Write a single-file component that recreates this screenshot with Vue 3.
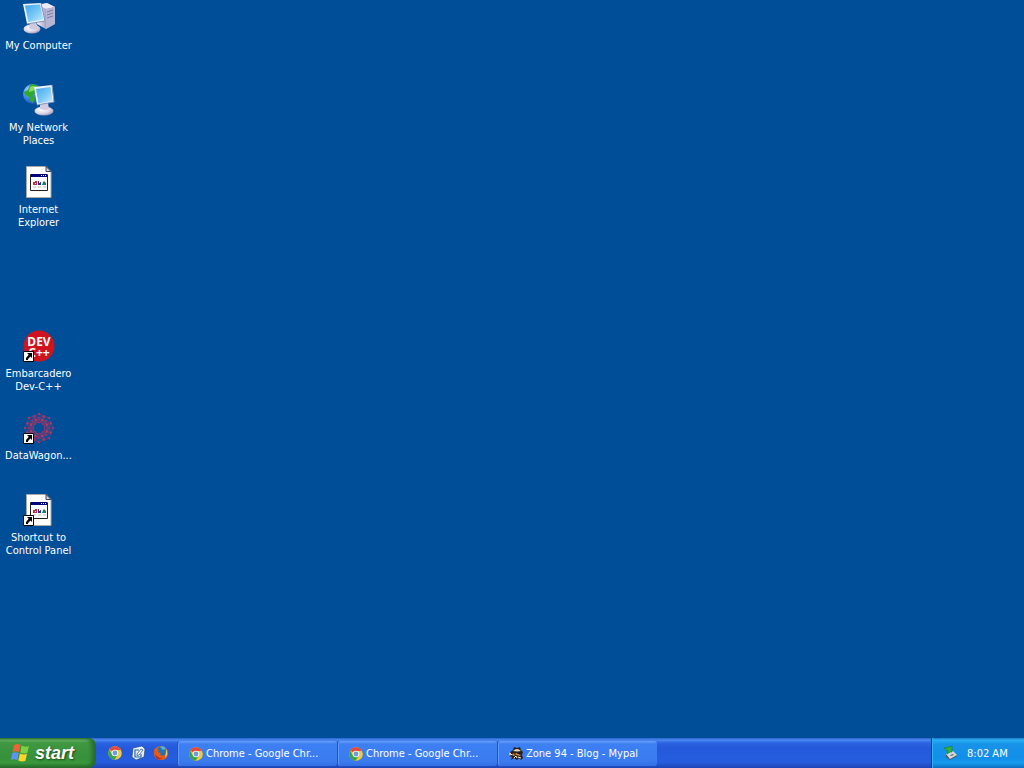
<script setup>
const shortcuts = [
  { icon: 'computer', label: 'My Computer' },
  { icon: 'network', label: 'My Network Places' },
  { icon: 'page', label: 'Internet Explorer' },
  { icon: 'dev', label: 'Embarcadero Dev-C++', link: true, afterGap: true },
  { icon: 'wagon', label: 'DataWagon...', link: true },
  { icon: 'page', label: 'Shortcut to Control Panel', link: true }
]
const quick = [
  { icon: 'chrome', label: 'Google Chrome' },
  { icon: 'desk', label: 'Show Desktop' },
  { icon: 'fox', label: 'Firefox' }
]
const tasks = [
  { icon: 'chrome', label: 'Chrome - Google Chr...' },
  { icon: 'chrome', label: 'Chrome - Google Chr...' },
  { icon: 'mypal', label: 'Zone 94 - Blog - Mypal' }
]
const petals = [0, 45, 90, 135, 180, 225, 270, 315]
</script>

<template>
  <div class="screen">
    <svg class="defs" aria-hidden="true">
      <defs>
        <linearGradient id="glass" x1="0" y1="0" x2="1" y2="1">
          <stop offset="0" stop-color="#3fa6ee" /><stop offset=".55" stop-color="#7cc9f8" /><stop offset="1" stop-color="#c9efff" />
        </linearGradient>
        <linearGradient id="case" x1="0" y1="0" x2="1" y2="0">
          <stop offset="0" stop-color="#f6f5fb" /><stop offset="1" stop-color="#a3a2c6" />
        </linearGradient>
        <radialGradient id="base" cx=".4" cy=".35" r=".7">
          <stop offset="0" stop-color="#fff" /><stop offset=".6" stop-color="#dcd5e6" /><stop offset="1" stop-color="#9d93b8" />
        </radialGradient>
        <radialGradient id="earth" cx=".3" cy=".3" r=".8">
          <stop offset="0" stop-color="#a9d4ff" /><stop offset=".5" stop-color="#3a86e8" /><stop offset="1" stop-color="#1648b8" />
        </radialGradient>
        <symbol id="computer" viewBox="0 0 32 32">
          <path d="M14 3 24 1l8 4v17l-9 5-9-5z" fill="#8d8cb5" />
          <path d="m14 3 10-2 8 4-9 2z" fill="#eceaf6" />
          <path d="M14 3l9 4v20l-9-5z" fill="url(#case)" />
          <path d="M23 7l9-2v17l-9 5z" fill="#b7b5d4" />
          <path d="m24 10 6-2M24 13l6-2M24 16l6-2" stroke="#777aa8" />
          <ellipse cx="9" cy="27" rx="8.5" ry="4.5" fill="url(#base)" />
          <path d="M7 20h6l2 6q-4 3-9 0z" fill="#d0c9df" />
          <path d="m0 2 18-1 4 18-18 3z" fill="#e9f1f9" />
          <path d="m2 3.500 15-1 3.500 15-15 2.500z" fill="url(#glass)" />
          <path d="m18 1 4 18-18 3" fill="none" stroke="#8493bd" />
        </symbol>
        <symbol id="network" viewBox="0 0 32 32">
          <circle cx="10" cy="10" r="10" fill="url(#earth)" />
          <path d="M7 1q5-2 9 2l-3 5-3 3 2 4-2 4-3-2-1-4-4-2-1-3 4-2z" fill="#2fa82b" />
          <path d="M7 3q4-2 6 0l-3 4-4 1z" fill="#8edc5c" />
          <ellipse cx="21" cy="27" rx="9.500" ry="4.500" fill="url(#base)" />
          <path d="M17 19h8l1 6q-4 2-9 0z" fill="#d3cce1" />
          <path d="m11 3 18-2 2 17-17 3z" fill="#ecf3fa" />
          <path d="m13 5 14.500-2 2 14-14 2.500z" fill="url(#glass)" />
          <path d="m29 1 2 17-17 3" fill="none" stroke="#8293bb" />
        </symbol>
        <symbol id="page" viewBox="0 0 32 32">
          <path d="M3.500.5H23l5 5v26H3.500z" fill="#fffefa" stroke="#a9a8a5" />
          <path d="M23 .5v5h5z" fill="#d8dde8" stroke="#3f4350" />
          <path d="M7.500 8.500h17v16h-17z" fill="#fff" stroke="#222" />
          <path d="M8 8h16v3H8z" fill="#000080" />
          <path d="M18 9.500h1m1 0h1m1 0h1" stroke="#fff" />
          <path d="M10 16h2v-1h2v4h-4z" fill="#c32b35" /><path d="M12 17h1v1h-1z" fill="#fff" />
          <path d="M15 15h1v2h2v2h-3z" fill="#25309a" /><path d="M17 16h1v1h-1z" fill="#8b2b55" />
          <path d="M20 16l1-1 2 2v2h-4z" fill="#16806e" />
          <path d="M10 21h3m2 0h3m2 0h3" stroke="#b9bcbf" />
        </symbol>
        <symbol id="dev" viewBox="0 0 32 32">
          <circle cx="16" cy="16" r="15.500" fill="#cf1420" />
          <text class="devtext" x="16" y="16" text-anchor="middle">DEV</text>
          <text class="devtext" x="16" y="27" text-anchor="middle">C++</text>
        </symbol>
        <symbol id="wagon" viewBox="0 0 32 32">
          <g fill="none" stroke="#9c3569" stroke-width=".7">
            <g v-for="a in petals" :key="a" :transform="`rotate(${a} 16 16)`">
              <path d="M16 11V2l5 2-5 7-5-7 5-2M11 4l-2 5 7 2 7-2-2-5M13 7h6" />
              <path d="M16 1.500h.1M11 4h.1M13 8h.1M19 8h.1" stroke="#cf3a50" stroke-width="1.600" stroke-linecap="round" />
            </g>
          </g>
        </symbol>
        <symbol id="arrow" viewBox="0 0 11 11">
          <path d="M.5.500h10v10H.5z" fill="#fff" stroke="#000" />
          <path d="M4 2h5v5L7.500 5.500 5 8v1H3V7l2.700-3.300z" fill="#000" />
        </symbol>
        <symbol id="chrome" viewBox="0 0 16 16">
          <circle cx="8" cy="8" r="6.800" fill="#f5c93b" />
          <path d="M8 8 2.100 4.600A6.800 6.800 0 0 1 13.900 4.600L14 5H8z" fill="#df4b3c" />
          <path d="M2.100 4.600A6.800 6.800 0 0 0 7.500 14.800L11 9.500 8 8 5 9.500z" fill="#35a157" />
          <circle cx="8" cy="8" r="3.300" fill="#f8f8f8" /><circle cx="8" cy="8" r="2.400" fill="#6b9be8" />
        </symbol>
        <symbol id="desk" viewBox="0 0 16 16">
          <path d="M3 3 12 1l3 3-1 8-8 3-4-3z" fill="#e6f1fb" stroke="#183d79" stroke-width=".6" />
          <path d="M9 5H5v7h6V9" fill="none" stroke="#2a68a7" stroke-width="1.200" />
          <path d="m7 9 4-5 2 1-4 5-2 .5z" fill="#fff" stroke="#30577c" stroke-width=".8" />
        </symbol>
        <symbol id="fox" viewBox="0 0 16 16">
          <circle cx="8" cy="8" r="7" fill="#e96b1c" />
          <circle cx="8.500" cy="6.500" r="5" fill="#2472b4" />
          <path d="M7 2q4-2 6 2l-3 1z" fill="#50b7d8" />
          <path d="M1.500 3 3 5l3-.5L5 7l3 1.500-1 1 3 1.500q4-1 4-6l1 3q-1 7-7 7T1 8z" fill="#e65a19" />
          <path d="M13 4q3 5-1 9 1-4 1-9" fill="#ffcb37" />
          <path d="M2 9q3 5 8 4-4 3-7-.500z" fill="#b7281d" />
        </symbol>
        <symbol id="mypal" viewBox="0 0 16 16">
          <path d="m5 4 1-3 3 1 3-1 1 3 2 2-1 3 1 3-2 2-2-2-2 2-3-2-3 2 1-3-3-1 1-2-1-1z" fill="#28201c" />
          <path d="M5 5q4-4 8 0L9 5.500z" fill="#e8d7b4" />
          <path d="m4 8 4-1 5 2-1 1-4-1-3 1z" fill="#d08a48" />
          <path d="m1 7 2 .5M1 9l3-.5M10 11l3 1M6 12l2-2 1 2" stroke="#fff0ce" />
          <circle cx="7" cy="8" r=".8" fill="#080808" /><circle cx="11" cy="7.500" r=".8" fill="#080808" />
        </symbol>
        <symbol id="flag" viewBox="0 0 20 20">
          <path d="M4 2q3-2 6.500 0L9 9Q6 7.500 2.500 9z" fill="#ef6237" />
          <path d="M11.500 2.500q3.500 2 7.500.5l-1.700 7q-3.500 1-7-.5z" fill="#7bd13f" />
          <path d="M2.300 10q3-1.500 6.500 0l-1.500 7q-3.500-1.500-6.500 0z" fill="#5c94f5" />
          <path d="M9.900 10.500q3.500 1.500 7.100.5l-1.700 7q-3.500 1-7-.5z" fill="#fbd42d" />
        </symbol>
        <symbol id="eject" viewBox="0 0 16 16">
          <path d="m4 10 7-3 4 4-7 4-4-3z" fill="#52565a" />
          <path d="m4 9 7-3 4 4-7 4z" fill="#d5d9d5" />
          <path d="m8 10 3-1 1 1-3 1z" fill="#6d7375" />
          <path d="m2 3 5-1 3-1v6H8L5 9l1-3z" fill="#35b52f" stroke="#147530" stroke-width=".6" />
        </symbol>
      </defs>
    </svg>

    <main class="desktop">
      <button v-for="s in shortcuts" :key="s.label" type="button" class="shortcut" :class="{ 'after-gap': s.afterGap }">
        <svg class="icon32" viewBox="0 0 32 32" aria-hidden="true">
          <use :href="'#' + s.icon" width="32" height="32" />
          <use v-if="s.link" href="#arrow" y="21" width="11" height="11" />
        </svg>
        <span class="caption">{{ s.label }}</span>
      </button>
    </main>

    <footer class="taskbar">
      <button type="button" class="start">
        <svg class="icon20" aria-hidden="true"><use href="#flag" /></svg>
        <span>start</span>
      </button>
      <nav class="quick" aria-label="Quick Launch">
        <button v-for="q in quick" :key="q.label" type="button" :aria-label="q.label">
          <svg class="icon16" aria-hidden="true"><use :href="'#' + q.icon" /></svg>
        </button>
      </nav>
      <div class="tasks">
        <button v-for="(t, i) in tasks" :key="i" type="button" class="task">
          <svg class="icon16" aria-hidden="true"><use :href="'#' + t.icon" /></svg>
          <span>{{ t.label }}</span>
        </button>
      </div>
      <div class="tray">
        <svg class="icon16" aria-hidden="true"><use href="#eject" /></svg>
        <time datetime="08:02">8:02 AM</time>
      </div>
    </footer>
  </div>
</template>

<style>
body { margin: 0; background: #004e98; }
</style>

<style scoped>
.screen {
  min-height: 100vh;
  display: flex;
  flex-direction: column;
  background: #004e98;
  color: #fff;
  font-family: Tahoma, "DejaVu Sans Condensed", "Noto Sans", sans-serif;
  font-size: 11px;
  line-height: 13px;
}
.defs { position: absolute; width: 0; height: 0; }
button {
  margin: 0;
  padding: 0;
  border: 0;
  background: none;
  color: inherit;
  font: inherit;
}
.icon32 { width: 32px; height: 32px; }
.icon20 { width: 20px; height: 20px; flex: none; }
.icon16 { width: 16px; height: 16px; flex: none; }
.desktop {
  flex: 1;
  display: flex;
  flex-direction: column;
  align-items: flex-start;
  padding-top: 2px;
}
.shortcut {
  display: flex;
  flex-direction: column;
  align-items: center;
  gap: 5px;
  width: 77px;
  height: 82px;
}
.after-gap { margin-top: 82px; }
.caption { padding: 0 2px; }
.devtext { font: bold 12px "Noto Sans", sans-serif; fill: #fff; }
.taskbar {
  display: flex;
  height: 30px;
  background: linear-gradient(#2a62cf 0, #4a8af2 2px, #2c62e0 5px, #2459db 10px, #265ddf 24px, #1c45b4 30px);
}
.start {
  width: 96px;
  display: flex;
  align-items: center;
  gap: 5px;
  padding-left: 10px;
  border-radius: 0 8px 8px 0;
  background: linear-gradient(#2f7a33 0, #68b268 2px, #3f9741 5px, #37913a 20px, #3a983c 25px, #256b29 30px);
  box-shadow: inset -4px 0 4px #246b2a;
  font: italic bold 18px/24px "Liberation Sans", sans-serif;
  text-shadow: 1px 1px 2px #1c4720;
}
.quick {
  display: flex;
  align-items: center;
  gap: 7px;
  width: 70px;
  padding-left: 11px;
}
.quick button { display: flex; }
.tasks { flex: 1; display: flex; min-width: 0; }
.task {
  width: 160px;
  margin: 3px 0 2px;
  display: flex;
  align-items: center;
  gap: 2px;
  padding-left: 10px;
  border-left: 1px solid #2453c4;
  border-radius: 3px;
  background: linear-gradient(#6aa0fb 0, #3d80f3 3px, #3a7cf0 20px, #3470e4 25px);
  box-shadow: inset 1px 0 0 #5e97f7;
  white-space: nowrap;
}
.tray {
  width: 82px;
  display: flex;
  align-items: center;
  gap: 9px;
  padding-left: 10px;
  border-left: 1px solid #0d3d96;
  background: linear-gradient(#1b79c6 0, #2bb0f3 2px, #1793e8 6px, #118ee9 20px, #159bee 25px, #0c6bbf 30px);
  box-shadow: inset 1px 0 0 #29b8f5;
  white-space: nowrap;
}
</style>
